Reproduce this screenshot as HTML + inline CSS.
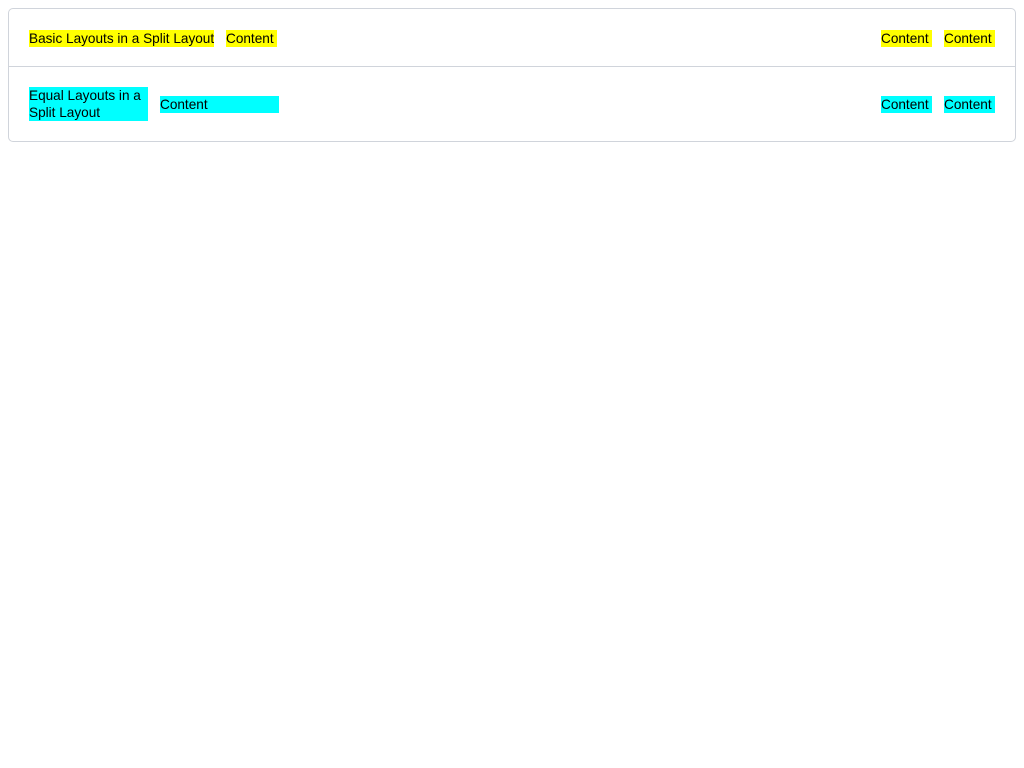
<!DOCTYPE html>
<html><head><style>
body{margin:0;background:#fff;font-family:"Liberation Sans",sans-serif;font-size:13.6px;color:#000;}
.card{position:absolute;left:8px;top:8px;width:1006px;height:132px;border:1px solid #d0d4db;border-radius:5px;}
.hr{position:absolute;left:9px;top:66px;width:1006px;height:1px;background:#d0d4db;}
.b{position:absolute;height:17px;line-height:17px;white-space:nowrap;overflow:hidden;}
.y{background:#ffff00;}
.c{background:#00ffff;}
</style></head><body>
<div class="card"></div>
<div class="hr"></div>
<div class="b y" style="left:29px;top:30px;width:185px;">Basic Layouts in a Split Layout</div>
<div class="b y" style="left:226px;top:30px;width:51px;">Content</div>
<div class="b y" style="left:881px;top:30px;width:51px;">Content</div>
<div class="b y" style="left:944px;top:30px;width:51px;">Content</div>
<div class="b c" style="left:29px;top:87px;width:119px;height:34px;white-space:normal;">Equal Layouts in a<br>Split Layout</div>
<div class="b c" style="left:160px;top:96px;width:119px;">Content</div>
<div class="b c" style="left:881px;top:96px;width:51px;">Content</div>
<div class="b c" style="left:944px;top:96px;width:51px;">Content</div>
</body></html>
